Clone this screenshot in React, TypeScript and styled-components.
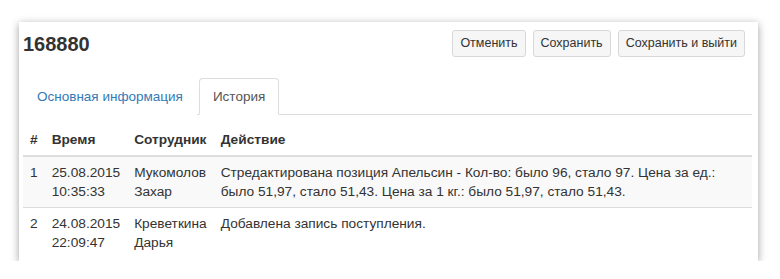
import React from "react";
import styled, { createGlobalStyle } from "styled-components";

const GlobalStyle = createGlobalStyle`
  html, body {
    margin: 0;
    padding: 0;
    background: #ffffff;
  }
  body {
    font-family: "Liberation Sans", Arial, Helvetica, sans-serif;
    font-size: 13.5px;
    line-height: 19px;
    color: #333333;
  }
  * { box-sizing: border-box; }
`;

const Page = styled.div`
  padding: 22px 22px 0 19px;
`;

const Panel = styled.div`
  width: 739px;
  background: #ffffff;
  box-shadow: 0 2px 8px rgba(0, 0, 0, 0.38);
  padding: 8px 6px 3px 4px;
`;

const Header = styled.div`
  display: flex;
  align-items: center;
  justify-content: space-between;
  padding-right: 7px;
`;

const Title = styled.h3`
  margin: 0;
  font-size: 20px;
  line-height: 22px;
  font-weight: 700;
  color: #333333;
`;

const Toolbar = styled.div`
  display: flex;
  gap: 7px;
`;

const Button = styled.button`
  font-family: inherit;
  font-size: 12.5px;
  line-height: 17px;
  padding: 4px 7px;
  color: #333333;
  background: #f6f6f6;
  border: 1px solid #d8d8d8;
  border-radius: 3px;
  cursor: pointer;
`;

const Tabs = styled.ul`
  display: flex;
  list-style: none;
  margin: 21px 0 0;
  padding: 0;
  border-bottom: 1px solid #dddddd;
`;

const Tab = styled.li<{ $active?: boolean }>`
  margin-right: 2px;
  margin-bottom: -1px;
  padding: 8px 13px;
  line-height: 19px;
  border: 1px solid ${(p) => (p.$active ? "#dddddd" : "transparent")};
  border-bottom-color: transparent;
  border-radius: 4px 4px 0 0;
  background: #ffffff;
  color: ${(p) => (p.$active ? "#555555" : "#337ab7")};
  cursor: ${(p) => (p.$active ? "default" : "pointer")};
`;

const Table = styled.table`
  width: 100%;
  margin-top: 9px;
  border-collapse: collapse;
  border-spacing: 0;
  font-size: 13.7px;
`;

const Th = styled.th<{ $shrink?: boolean }>`
  text-align: left;
  font-weight: 700;
  vertical-align: bottom;
  padding: 6px 7px;
  border-bottom: 2px solid #dddddd;
  width: ${(p) => (p.$shrink ? "1%" : "auto")};
`;

const Tr = styled.tr<{ $striped?: boolean }>`
  background: ${(p) => (p.$striped ? "#f9f9f9" : "transparent")};
`;

const Td = styled.td`
  vertical-align: top;
  padding: 6px 7px;
  border-top: 1px solid #dddddd;
`;

const rows = [
  {
    n: 1,
    date: "25.08.2015",
    time: "10:35:33",
    user: "Мукомолов Захар",
    action:
      "Стредактирована позиция Апельсин - Кол-во: было 96, стало 97. Цена за ед.: было 51,97, стало 51,43. Цена за 1 кг.: было 51,97, стало 51,43.",
  },
  {
    n: 2,
    date: "24.08.2015",
    time: "22:09:47",
    user: "Креветкина Дарья",
    action: "Добавлена запись поступления.",
  },
];

export default function App() {
  return (
    <>
      <GlobalStyle />
      <Page>
        <Panel>
          <Header>
            <Title>168880</Title>
            <Toolbar>
              <Button>Отменить</Button>
              <Button>Сохранить</Button>
              <Button>Сохранить и выйти</Button>
            </Toolbar>
          </Header>
          <Tabs>
            <Tab>Основная информация</Tab>
            <Tab $active>История</Tab>
          </Tabs>
          <Table>
            <thead>
              <tr>
                <Th $shrink>#</Th>
                <Th $shrink>Время</Th>
                <Th $shrink>Сотрудник</Th>
                <Th>Действие</Th>
              </tr>
            </thead>
            <tbody>
              {rows.map((r, i) => (
                <Tr key={r.n} $striped={i % 2 === 0}>
                  <Td>{r.n}</Td>
                  <Td>
                    {r.date} {r.time}
                  </Td>
                  <Td>{r.user}</Td>
                  <Td>{r.action}</Td>
                </Tr>
              ))}
            </tbody>
          </Table>
        </Panel>
      </Page>
    </>
  );
}
